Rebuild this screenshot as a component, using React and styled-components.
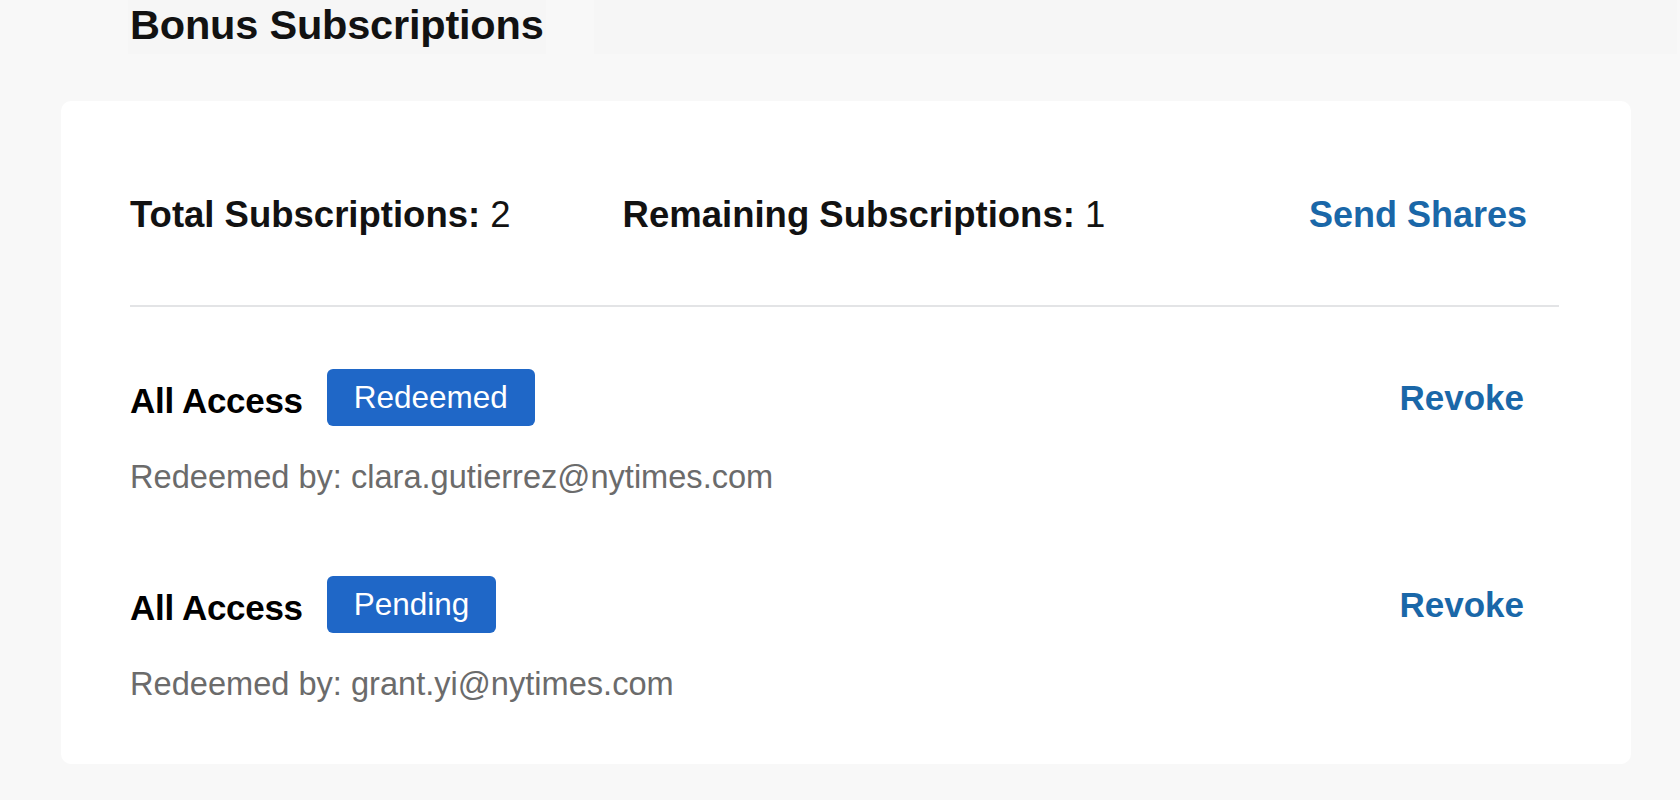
import styled, { createGlobalStyle } from "styled-components";

const GlobalStyle = createGlobalStyle`
  html, body {
    margin: 0;
    padding: 0;
    background: #f8f8f8;
  }
  body {
    font-family: "Liberation Sans", Arial, sans-serif;
    color: #121212;
  }
`;

const Page = styled.div`
  width: 1680px;
  height: 800px;
  overflow: hidden;
  padding: 0 49px 0 61px;
  box-sizing: border-box;
`;

const Header = styled.header`
  display: flex;
  align-items: stretch;
  gap: 48px;
  height: 54px;
  padding-left: 67px;
  margin-bottom: 47px;
`;

const Titulo = styled.h1`
  margin: 0;
  padding: 0 2px 4px 2px;
  display: flex;
  align-items: center;
  font-size: 41.5px;
  font-weight: 700;
  letter-spacing: -0.2px;
  color: #121212;
  background: #f6f6f6;
`;

const HeaderFill = styled.div`
  flex: 1;
  margin-right: -46px;
  background: #f6f6f6;
`;

const Card = styled.section`
  background: #ffffff;
  border-radius: 10px;
  padding: 92px 72px 60px 69px;
  display: flex;
  flex-direction: column;
`;

const StatsRow = styled.div`
  display: flex;
  align-items: center;
  height: 44px;
  padding-right: 32px;
  padding-bottom: 68px;
  border-bottom: 2px solid #e3e4e6;
`;

const Stat = styled.div`
  font-size: 36.5px;
  color: #121212;
  margin-right: ${(p) => p.$gap || 0}px;
  b {
    font-weight: 700;
  }
`;

const LinkButton = styled.button`
  margin-left: auto;
  background: none;
  border: none;
  padding: 0;
  font-family: "Liberation Sans", Arial, sans-serif;
  font-size: ${(p) => p.$size || 35}px;
  font-weight: 700;
  color: #1a67a8;
  cursor: pointer;
`;

const Lista = styled.div`
  display: flex;
  flex-direction: column;
  gap: 79px;
  padding-top: 62px;
`;

const Item = styled.div`
  display: flex;
  flex-direction: column;
  gap: 31px;
`;

const ItemTopo = styled.div`
  display: flex;
  align-items: center;
  height: 57px;
  padding-right: 35px;
`;

const Plano = styled.span`
  font-size: 35px;
  font-weight: 700;
  color: #000;
  margin-top: 7px;
  letter-spacing: -0.3px;
`;

const Badge = styled.span`
  margin-left: 24px;
  height: 57px;
  box-sizing: border-box;
  padding: 0 27px;
  display: inline-flex;
  align-items: center;
  border-radius: 6px;
  background: #1f67c7;
  color: #ffffff;
  font-size: 31.5px;
`;

const Detalhe = styled.div`
  font-size: 32.6px;
  line-height: 40px;
  color: #6b6b6b;
`;

const assinaturas = [
  { id: 1, plano: "All Access", status: "Redeemed", email: "clara.gutierrez@nytimes.com" },
  { id: 2, plano: "All Access", status: "Pending", email: "grant.yi@nytimes.com" },
];

const App = () => {
  return (
    <Page>
      <GlobalStyle />
      <Header>
        <Titulo>Bonus Subscriptions</Titulo>
        <HeaderFill />
      </Header>

      <Card>
        <StatsRow>
          <Stat $gap={112}>
            <b>Total Subscriptions:</b> 2
          </Stat>
          <Stat>
            <b>Remaining Subscriptions:</b> 1
          </Stat>
          <LinkButton $size={36}>Send Shares</LinkButton>
        </StatsRow>

        <Lista>
          {assinaturas.map((a) => (
            <Item key={a.id}>
              <ItemTopo>
                <Plano>{a.plano}</Plano>
                <Badge>{a.status}</Badge>
                <LinkButton>Revoke</LinkButton>
              </ItemTopo>
              <Detalhe>Redeemed by: {a.email}</Detalhe>
            </Item>
          ))}
        </Lista>
      </Card>
    </Page>
  );
};

export default App;
